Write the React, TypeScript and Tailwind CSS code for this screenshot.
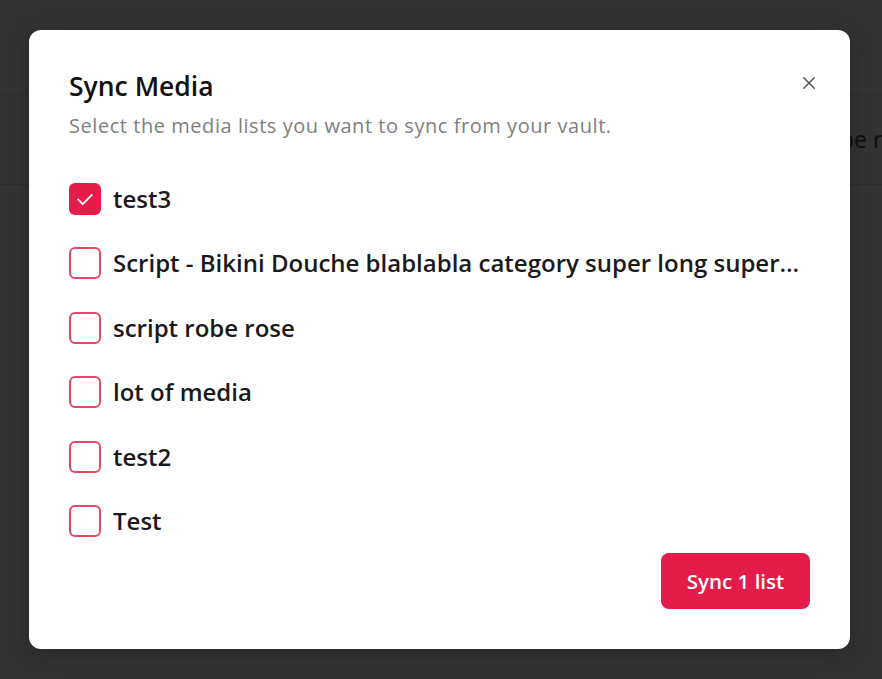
import React, { useState } from 'react';

const lists = [
  'test3',
  'Script - Bikini Douche blablabla category super long super long name for the list',
  'script robe rose',
  'lot of media',
  'test2',
  'Test',
];

const font = { fontFamily: '"Open Sans", "Noto Sans", sans-serif' };

export default function App() {
  const [checked, setChecked] = useState<Record<string, boolean>>({ test3: true });
  const count = Object.values(checked).filter(Boolean).length;

  return (
    <div className="relative h-[679px] w-[882px] overflow-hidden bg-[#333333]" style={font}>
      {/* page behind overlay */}
      <div className="h-[95px] border-b border-[#2b2b2b]" />
      <div className="flex h-[90px] items-center overflow-hidden whitespace-nowrap border-b border-[#2b2b2b] pl-[840px] text-[23px] text-[#0d0d0d]">
        be removed
      </div>

      {/* dialog */}
      <div className="absolute left-[29px] top-[30px] w-[821px] rounded-xl bg-white p-10 shadow-[0_4px_24px_rgba(0,0,0,0.25)]">
        <button className="absolute right-[28px] top-[40px] p-1 text-[#555]">
          <svg width="18" height="18" viewBox="0 0 24 24" fill="none" stroke="currentColor" strokeWidth="2" strokeLinecap="round">
            <path d="M5 5l14 14M19 5L5 19" />
          </svg>
        </button>
        <h2 className="text-[26.5px] font-semibold leading-8 text-[#111]">Sync Media</h2>
        <p className="mt-[10px] text-[20px] leading-7 tracking-[0.55px] text-[#808080]">
          Select the media lists you want to sync from your vault.
        </p>

        <div className="mt-[43px] flex flex-col gap-[32.4px]">
          {lists.map((name) => {
            const on = !!checked[name];
            return (
              <label key={name} className="flex h-8 cursor-pointer items-center gap-3">
                <button
                  onClick={() => setChecked({ ...checked, [name]: !on })}
                  className={
                    on
                      ? 'flex h-8 w-8 shrink-0 items-center justify-center rounded-md bg-[#e31c4a]'
                      : 'flex h-8 w-8 shrink-0 items-center justify-center rounded-md border-2 border-[#e8456b] bg-white'
                  }
                >
                  {on && (
                    <svg width="22" height="22" viewBox="0 0 24 24" fill="none" stroke="white" strokeWidth="2" strokeLinecap="round" strokeLinejoin="round">
                      <path d="M4.5 12.5l5 5 10-10" />
                    </svg>
                  )}
                </button>
                <span className="truncate pr-2 text-[24px] font-semibold text-[#1a1a1a]">{name}</span>
              </label>
            );
          })}
        </div>

        <div className="mt-4 flex justify-end">
          <button className="h-14 w-[149px] rounded-lg bg-[#e31c4a] text-[20.5px] font-semibold text-white">
            Sync {count} {count === 1 ? 'list' : 'lists'}
          </button>
        </div>
      </div>
    </div>
  );
}
